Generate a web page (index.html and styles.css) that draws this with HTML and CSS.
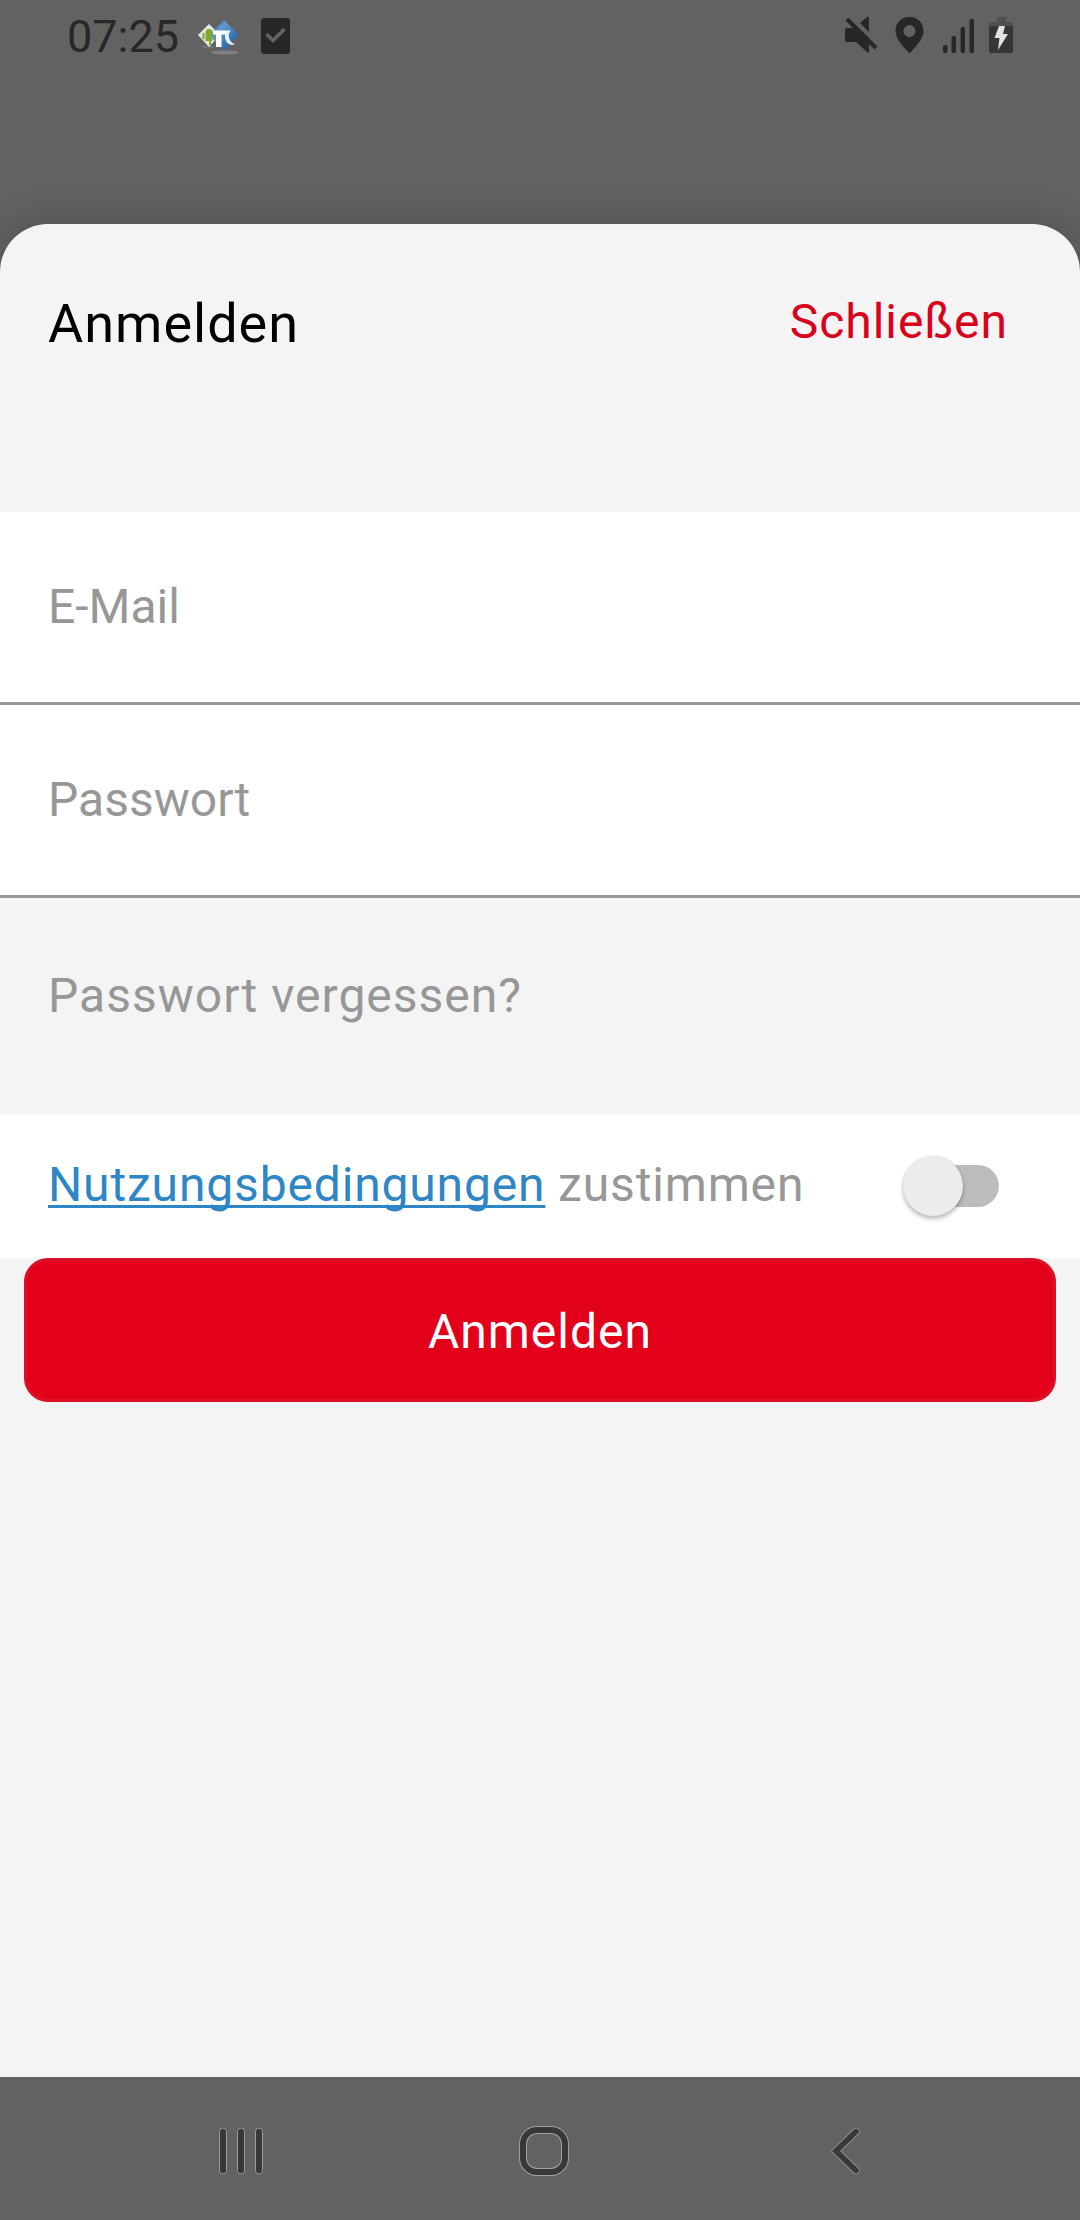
FILE: index.html
```html
<!DOCTYPE html>
<html lang="de">
<head>
<meta charset="utf-8">
<title>Anmelden</title>
<link rel="stylesheet" href="styles.css">
</head>
<body>
<div class="screen">
  <header class="status">
    <span class="clock">07:25</span>
    <svg class="app-icon" width="42" height="36" viewBox="0 0 42 36">
      <defs>
        <linearGradient id="blue" x1="0" y1="0" x2="1" y2="1">
          <stop offset="0" stop-color="#2f69a8"/><stop offset=".35" stop-color="#5f97cd"/><stop offset="1" stop-color="#124f93"/>
        </linearGradient>
      </defs>
      <ellipse cx="27" cy="32.500" rx="14" ry="2" fill="#808080"/>
      <ellipse cx="10" cy="27" rx="6" ry="1.500" fill="#747474"/>
      <path d="M11 4 22 15 11 27 0 15Z" fill="#e4e8e0"/>
      <path d="M26 0 41 15 26 31 11 15Z" fill="url(#blue)"/>
      <path d="M7.500 13q0-4 3.500-4 3 0 3.500 3H17v2h-2.500v7H13v4h-2v-4H7.500zM4.500 13h2v6h-2z" fill="#7fa832"/>
      <path d="M15 10.500h13v4h-4.500V27H18V14.500h-3z" fill="#fff"/>
      <path d="M28 10.500h5q-3 3-2 7 1 5 6 7-5 1.500-8-2-3.500-5-1-12z" fill="#e8f4fb"/>
    </svg>
    <svg class="task-icon" width="29" height="36" viewBox="0 0 29 36">
      <rect width="29" height="36" rx="3" fill="#272727"/>
      <path d="M5.500 16 12 22.500 23.500 11" fill="none" stroke="#636363" stroke-width="3.600"/>
    </svg>
    <span class="grow"></span>
    <svg class="mute-icon" width="34" height="38" viewBox="0 0 34 38" fill="#272727">
      <path d="M2 12h7L24 27v9q0 1-1.500.5L11 26H2q-2 0-2-2V14q0-2 2-2zM15 7l7-6q2-1 2 1v14z"/>
      <path d="M2 3 31 32" stroke="#272727" stroke-width="4.200"/>
    </svg>
    <svg class="pin-icon" width="29" height="37" viewBox="0 0 29 37">
      <path fill="#272727" fill-rule="evenodd" d="M14.500 0C6.500 0 .500 6 .500 14c0 8 8 16 14 22.500C20.500 30 28.500 22 28.500 14 28.500 6 22.500 0 14.500 0zM14.500 8a6 6 0 1 1 0 12 6 6 0 0 1 0-12z"/>
    </svg>
    <svg class="signal-icon" width="32" height="36" viewBox="0 0 32 36" fill="#272727">
      <rect x="0" y="27" width="4.500" height="8" rx="2"/><rect x="8.500" y="18" width="4.500" height="17" rx="2"/>
      <rect x="17.500" y="9" width="4.500" height="26" rx="2"/><rect x="26.500" y="1" width="4.500" height="34" rx="2"/>
    </svg>
    <svg class="battery-icon" width="25" height="36" viewBox="0 0 25 36">
      <path d="M8 0h9v5h5q2 0 2 2v3H0V7q0-2 2-2h6z" fill="#4f4f4f"/>
      <path d="M0 9h24v25q0 2-2 2H2q-2 0-2-2z" fill="#363636"/>
      <path d="M10 9h6l-2 8h5L9 33l1.500-12H5.500z" fill="#e2e2e2"/>
    </svg>
  </header>

  <main class="sheet">
    <div class="sheet-head">
      <h1 class="title">Anmelden</h1>
      <a class="close">Schließen</a>
    </div>
    <div class="field"><span class="hint">E-Mail</span></div>
    <div class="field"><span class="hint">Passwort</span></div>
    <div class="forgot">Passwort vergessen?</div>
    <div class="terms">
      <p class="terms-text"><a class="link">Nutzungsbedingungen</a> zustimmen</p>
      <div class="switch"><span class="track"></span><span class="thumb"></span></div>
    </div>
    <button class="submit">Anmelden</button>
  </main>

  <nav class="navbar">
    <svg class="nav-recents" width="46" height="50" viewBox="0 0 46 50" fill="#383838" stroke="#9b9b9b">
      <rect x="1.500" y="2" width="7" height="46" rx="3.500"/><rect x="19.500" y="2" width="7" height="46" rx="3.500"/><rect x="37.500" y="2" width="7" height="46" rx="3.500"/>
    </svg>
    <svg class="nav-home" width="50" height="50" viewBox="0 0 50 50" fill="none">
      <rect x="4" y="4" width="42" height="42" rx="14" stroke="#a0a0a0" stroke-width="8"/>
      <rect x="4" y="4" width="42" height="42" rx="14" stroke="#383838" stroke-width="6"/>
    </svg>
    <svg class="nav-back" width="30" height="50" viewBox="0 0 30 50" fill="none" stroke-linecap="round">
      <path d="M25 5.500 5 25 25 44.500" stroke="#939393" stroke-width="7.500"/>
      <path d="M25 5.500 5 25 25 44.500" stroke="#383838" stroke-width="5.700"/>
    </svg>
  </nav>
</div>
</body>
</html>
```
FILE: styles.css
```css
* { box-sizing: border-box; }
body { margin: 0; font-family: Roboto, "Liberation Sans", sans-serif; }
.screen {
  width: 1080px;
  height: 2220px;
  display: flex;
  flex-direction: column;
  background: #626262;
  overflow: hidden;
}
.status {
  height: 224px;
  padding: 0 66px 0 67px;
  display: flex;
  align-items: flex-start;
}
.status svg { flex: none; }
.clock {
  width: 131px;
  font-size: 45px;
  line-height: 73px;
  color: #272727;
}
.grow { flex: 1; }
.app-icon { margin-top: 20px; }
.task-icon { margin: 18px 0 0 21px; }
.mute-icon { margin: 16px 16px 0 0; }
.pin-icon { margin: 17px 19px 0 0; }
.signal-icon { margin: 18px 14px 0 0; }
.battery-icon { margin-top: 17px; }

.sheet {
  height: 1853px;
  background: #f4f4f4;
  border-radius: 48px 48px 0 0;
  box-shadow: 0 0 40px rgba(0, 0, 0, .2);
  display: flex;
  flex-direction: column;
}
.sheet-head {
  height: 288px;
  padding: 68px 72px 0 48px;
  display: flex;
  justify-content: space-between;
  align-items: flex-start;
}
.title {
  margin: 0;
  font-size: 54px;
  font-weight: 400;
  line-height: 64px;
  letter-spacing: 1px;
  color: #000;
}
.close {
  font-size: 48px;
  line-height: 59px;
  letter-spacing: 1px;
  color: #d9021c;
}
.field {
  height: 193px;
  padding: 0 48px 2px;
  display: flex;
  align-items: center;
  background: #fff;
  border-bottom: 3px solid #979797;
}
.hint { font-size: 48px; color: #979797; }
.forgot {
  height: 216px;
  padding: 68px 48px 0;
  font-size: 48px;
  line-height: 60px;
  letter-spacing: 1px;
  color: #979797;
}
.terms {
  height: 144px;
  padding: 0 81px 0 48px;
  display: flex;
  align-items: center;
  justify-content: space-between;
  background: #fff;
}
.terms-text {
  margin: 0;
  padding-bottom: 3px;
  font-size: 48px;
  letter-spacing: .84px;
  color: #979797;
}
.link {
  color: #2f86c5;
  text-decoration: underline;
  text-decoration-thickness: 3px;
  text-decoration-skip-ink: none;
  text-underline-offset: 4px;
}
.switch {
  width: 96px;
  height: 60px;
  display: grid;
  align-items: center;
}
.track, .thumb { grid-area: 1 / 1; }
.track {
  width: 84px;
  height: 42px;
  border-radius: 21px;
  background: #bcbcbc;
  justify-self: end;
}
.thumb {
  width: 60px;
  height: 60px;
  border-radius: 50%;
  background: #ececec;
  box-shadow: 0 3px 4px rgba(0, 0, 0, .26), 0 0 2px rgba(0, 0, 0, .12);
}
.submit {
  height: 144px;
  margin: 0 24px;
  padding: 2px 0 0;
  border: 3px solid #dc1027;
  border-radius: 24px;
  background: #e2001a;
  color: #fff;
  font: 400 48px Roboto, "Liberation Sans", sans-serif;
  letter-spacing: 1px;
}
.navbar {
  position: relative;
  height: 143px;
  padding: 5px 219px 0 218px;
  display: flex;
  align-items: center;
  justify-content: space-between;
  background: #626262;
}
.nav-home { margin-right: 8px; }
```
